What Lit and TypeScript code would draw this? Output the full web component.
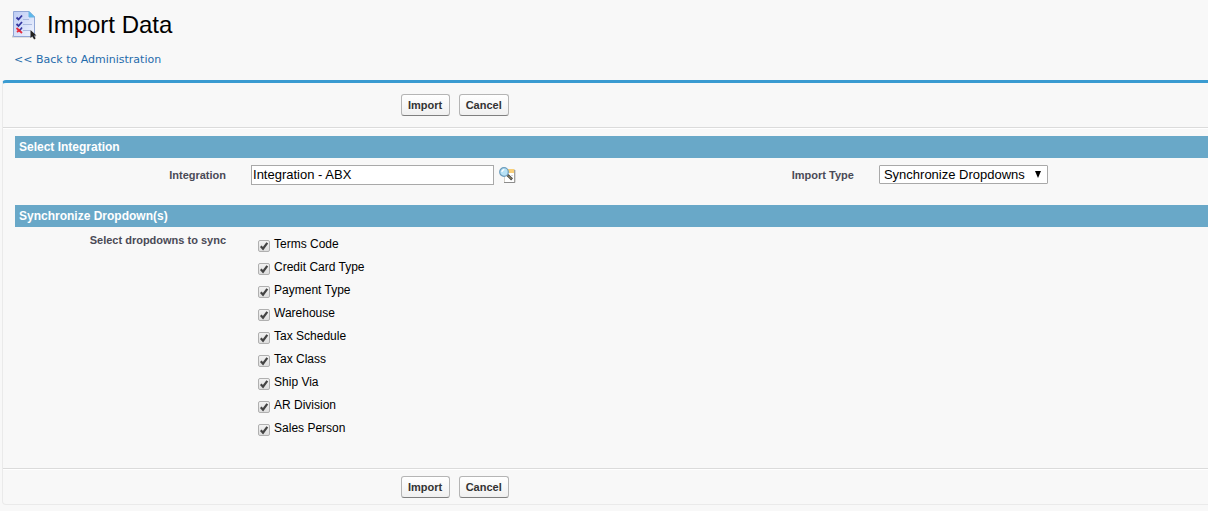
import { LitElement, html, css } from "lit";
import { customElement, state } from "lit/decorators.js";

const DROPDOWNS = [
  "Terms Code",
  "Credit Card Type",
  "Payment Type",
  "Warehouse",
  "Tax Schedule",
  "Tax Class",
  "Ship Via",
  "AR Division",
  "Sales Person",
];

@customElement("action-bar")
export class ActionBar extends LitElement {
  static styles = css`
    :host {
      display: flex;
      gap: 9px;
      padding: 11px 0 11px 33%;
    }
    .btn {
      height: 22px;
      min-width: 49px;
      box-sizing: border-box;
      padding: 0 6px;
      border: 1px solid #b5b5b5;
      border-bottom-color: #7f7f7f;
      border-radius: 3px;
      background: linear-gradient(#ffffff, #f0f0f0);
      color: #333333;
      font: bold 11px/20px "Liberation Sans", Arial, sans-serif;
      cursor: pointer;
    }
  `;

  render() {
    return html`
      <button class="btn" type="button">Import</button>
      <button class="btn" type="button">Cancel</button>
    `;
  }
}

@customElement("app-root")
export class AppRoot extends LitElement {
  static styles = css`
    :host {
      display: block;
      min-height: 100vh;
      box-sizing: border-box;
      padding-bottom: 6px;
      background: #f8f8f8;
      color: #000000;
      font: 12px/16px "Liberation Sans", Arial, sans-serif;
    }
    .header {
      display: flex;
      align-items: center;
      gap: 10px;
      padding: 9px 11px 0;
    }
    .page-icon {
      display: block;
      width: 26px;
      height: 32px;
    }
    .title {
      margin: 0;
      font-size: 24px;
      line-height: 32px;
      font-weight: normal;
    }
    .back {
      display: block;
      padding: 11px 14px 12px;
      font: 11px/16px "DejaVu Sans", Verdana, sans-serif;
    }
    .back a {
      color: #1f6bab;
      text-decoration: none;
    }
    .panel {
      margin-left: 2px;
      border: 1px solid #eaeaea;
      border-top: 3px solid #3a9bd1;
      border-right: 0;
      border-radius: 4px 0 0 4px;
    }
    .body {
      padding: 7px 0 0 12px;
      border-top: 1px solid #dbdbdb;
      border-bottom: 1px solid #dbdbdb;
      box-shadow: inset 0 1px #ffffff, 0 1px #ffffff;
    }
    .bottom {
      padding: 7px 0 6px 33%;
    }
    .band {
      margin: 1px 0 0;
      padding: 0 4px;
      background: #69a8c8;
      color: #ffffff;
      font-size: 12px;
      line-height: 22px;
      font-weight: bold;
    }
    .fields {
      display: grid;
      grid-template-columns: 18fr 32fr 18fr 27fr;
      align-items: start;
      padding: 7px 0 19px;
    }
    .label {
      padding-right: 15px;
      color: #4a4a56;
      font-size: 11px;
      line-height: 20px;
      font-weight: bold;
      text-align: right;
    }
    .value {
      display: flex;
      align-items: center;
      gap: 5px;
      padding-left: 10px;
    }
    .text {
      width: 243px;
      height: 20px;
      box-sizing: border-box;
      padding: 0 1px 1px;
      border: 1px solid #a9a9a9;
      background: #ffffff;
      color: #000000;
      font: 13px/17px "Liberation Sans", Arial, sans-serif;
    }
    .lookup {
      display: block;
      padding: 0;
      border: 0;
      background: none;
      cursor: pointer;
    }
    .lookup svg {
      display: block;
      width: 17px;
      height: 17px;
    }
    .select {
      display: grid;
      align-items: center;
    }
    .select select {
      grid-area: 1 / 1;
      width: 169px;
      height: 19px;
      box-sizing: border-box;
      padding: 0 20px 0 4px;
      border: 1px solid #a9a9a9;
      border-radius: 1px;
      appearance: none;
      background: #ffffff;
      color: #000000;
      font: 13px/17px "Liberation Sans", Arial, sans-serif;
    }
    .select svg {
      grid-area: 1 / 1;
      justify-self: end;
      width: 6px;
      height: 7px;
      margin-right: 7px;
      pointer-events: none;
    }
    .sync {
      padding: 3px 0 28px;
    }
    .checks {
      display: grid;
      margin: 0;
      padding: 3px 0 0 17px;
      list-style: none;
    }
    .check {
      display: flex;
      align-items: flex-start;
      gap: 4px;
      height: 23px;
    }
    .box {
      display: grid;
      padding-top: 7px;
    }
    .box input {
      grid-area: 1 / 1;
      width: 12px;
      height: 12px;
      box-sizing: border-box;
      margin: 0;
      appearance: none;
      border: 1px solid #b0b0b0;
      border-radius: 2px;
      background: linear-gradient(#f2f2f2, #dedede);
    }
    .box svg {
      grid-area: 1 / 1;
      width: 12px;
      height: 12px;
      visibility: hidden;
      pointer-events: none;
    }
    .box input:checked + svg {
      visibility: visible;
    }
    .check label {
      padding-top: 3px;
    }
  `;

  @state() private selected = new Set(DROPDOWNS);

  private toggle(name: string) {
    const next = new Set(this.selected);
    next.has(name) ? next.delete(name) : next.add(name);
    this.selected = next;
  }

  private pageIcon() {
    return html`<svg class="page-icon" viewBox="0 0 26 32" aria-hidden="true">
      <defs>
        <linearGradient id="sheet" x1="0" y1="0" x2="1" y2="1">
          <stop offset="0" stop-color="#bccbf3" />
          <stop offset="1" stop-color="#f1f5ff" />
        </linearGradient>
      </defs>
      <path d="M1 27.500h24" stroke="#c9c9c9" stroke-width="2" />
      <path d="M2.500 2.500h15.500l5.500 5.500v19.500h-21z" fill="url(#sheet)" stroke="#91a6d6" />
      <path d="M18 2.500v5.500h5.500z" fill="#59b9ee" stroke="#69b3e0" />
      <path d="M12 10.500h6M12 15.500h9M12 21.500h7" stroke="#aab9df" />
      <path d="M5.500 8.500l2 2L11 6.500M5.500 15l2 2L11 13" fill="none" stroke="#3436a0" stroke-width="1.800" />
      <path d="M8 22.500l3-4" fill="none" stroke="#3436a0" stroke-width="1.500" />
      <path d="M5.500 19l5.500 5M6 23l3-2.500" stroke="#e52b3b" stroke-width="1.800" />
      <path d="M19.500 21v8l1.800-1.800 1.800 3.300 1.500-.9-1.600-3.100h2.500z" fill="#222222" />
    </svg>`;
  }

  private lookupIcon() {
    return html`<svg viewBox="0 0 17 17" aria-hidden="true">
      <path d="M5.500 2.500h10v13h-10z" fill="#ffffff" stroke="#d5d2c8" />
      <path d="M15.800 3v12.500H5" fill="none" stroke="#8c8c8c" />
      <path d="M7 2h8v4H7z" fill="#f9cf78" />
      <path d="M12 8.500h2M12 11h2" stroke="#d8d8d8" />
      <path d="M8.500 8l4.500 4.500" stroke="#444444" stroke-width="2.600" />
      <path d="M9 8.500l3.300 3.300" stroke="#b8aa72" />
      <circle cx="5" cy="5" r="4.300" fill="#b8e2f6" stroke="#6c9dbd" stroke-width="1.200" />
      <path d="M3 5a2.300 2.300 0 0 1 2.300-2.300" fill="none" stroke="#ffffff" stroke-width="1.300" />
    </svg>`;
  }

  render() {
    return html`
      <header class="header">
        ${this.pageIcon()}
        <h1 class="title">Import Data</h1>
      </header>
      <nav class="back"><a href="#">&lt;&lt; Back to Administration</a></nav>

      <main class="panel">
        <action-bar></action-bar>
        <div class="body">
          <h2 class="band">Select Integration</h2>
          <div class="fields">
            <label class="label" for="integration">Integration</label>
            <div class="value">
              <input class="text" id="integration" type="text" value="Integration - ABX" />
              <button class="lookup" type="button" aria-label="Integration lookup">
                ${this.lookupIcon()}
              </button>
            </div>
            <label class="label" for="type">Import Type</label>
            <div class="value">
              <span class="select">
                <select id="type">
                  <option>Synchronize Dropdowns</option>
                </select>
                <svg viewBox="0 0 6 7" aria-hidden="true"><path d="M0 0h6L3 7z" /></svg>
              </span>
            </div>
          </div>

          <h2 class="band">Synchronize Dropdown(s)</h2>
          <div class="fields sync">
            <span class="label" id="sync-label">Select dropdowns to sync</span>
            <ul class="checks" aria-labelledby="sync-label">
              ${DROPDOWNS.map(
                (name, i) => html`<li class="check">
                  <span class="box">
                    <input
                      id="dropdown-${i}"
                      type="checkbox"
                      .checked=${this.selected.has(name)}
                      @change=${() => this.toggle(name)}
                    />
                    <svg viewBox="0 0 12 12" aria-hidden="true">
                      <path d="M2.800 6.300l2.200 2.400 4.300-5.900" fill="none" stroke="#444444" stroke-width="2.200" />
                    </svg>
                  </span>
                  <label for="dropdown-${i}">${name}</label>
                </li>`
              )}
            </ul>
          </div>
        </div>
        <action-bar class="bottom"></action-bar>
      </main>
    `;
  }
}
